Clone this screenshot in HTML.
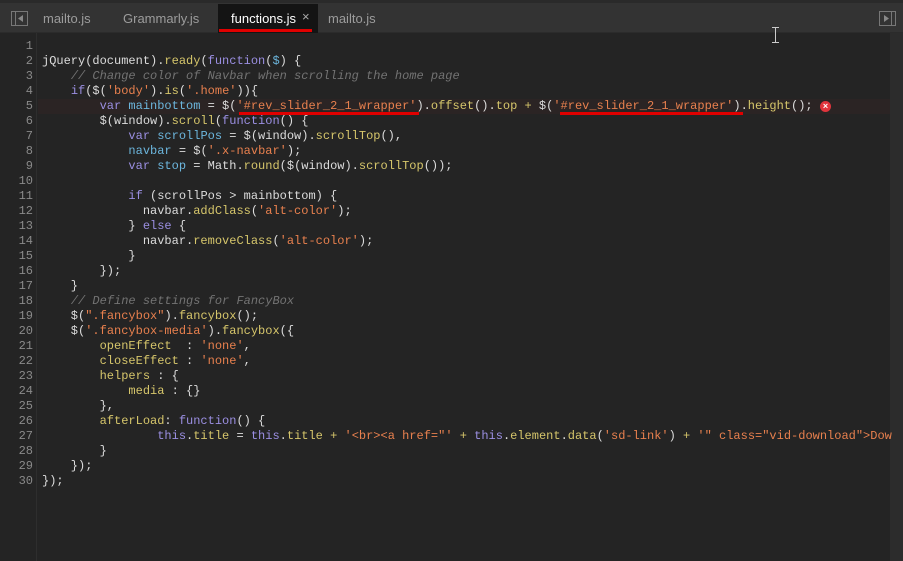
<!DOCTYPE html>
<html><head><meta charset="utf-8"><style>
*{margin:0;padding:0;box-sizing:border-box}
body{width:903px;height:561px;background:#242424;overflow:hidden;position:relative;font-family:"Liberation Sans",sans-serif}
#top{position:absolute;left:0;top:0;width:903px;height:3px;background:#2a2a2a}
#tabs{position:absolute;left:0;top:3px;width:903px;height:30px;background:#333;border-bottom:1px solid #2b2b2b}
.tab{position:absolute;top:8px;font-size:13px;color:#9c9c9c}
#act{position:absolute;left:218px;top:1px;width:100px;height:29px;background:#141414}
#gut{position:absolute;left:0;top:33px;width:37px;height:528px;border-right:1px solid #2e2e2e}
#sb{position:absolute;left:890px;top:33px;width:13px;height:528px;background:#2c2c2c}
.ln{position:absolute;left:0;width:33px;text-align:right;font:12px/15px "Liberation Mono",monospace;color:#8a8a8a}
.cl{position:absolute;left:42px;font:12px/15px "Liberation Mono",monospace;color:#dcdcdc;white-space:pre}
.k{color:#9b8fe2}.i{color:#6cb6dd}.p{color:#d6c66b}.s{color:#e8804e}.c{color:#737373;font-style:italic}
.red{position:absolute;height:3px;background:#e00000}
</style></head><body>
<div id="top"></div>
<div id="tabs">
<div id="act"></div>
<svg style="position:absolute;left:11px;top:8px" width="17" height="15"><rect x="0.5" y="0.5" width="16" height="14" fill="none" stroke="#777"/><line x1="4.5" y1="1" x2="4.5" y2="14" stroke="#777"/><path d="M12 4 L7 7.5 L12 11Z" fill="#888"/></svg>
<div class="tab" style="left:43px">mailto.js</div>
<div class="tab" style="left:123px">Grammarly.js</div>
<div class="tab" style="left:231px;color:#fff">functions.js</div>
<div class="tab" style="left:302px;color:#aaa;font-size:13px;top:6px">×</div>
<div class="tab" style="left:328px">mailto.js</div>
<svg style="position:absolute;left:879px;top:8px" width="17" height="15"><rect x="0.5" y="0.5" width="16" height="14" fill="none" stroke="#777"/><line x1="12.5" y1="1" x2="12.5" y2="14" stroke="#777"/><path d="M5 4 L10 7.5 L5 11Z" fill="#888"/></svg>
</div>
<div class="red" style="left:219px;top:29px;width:93px"></div>
<div style="position:absolute;top:28px;width:6px;height:14px;border-left:1px solid #ccc;left:775px"></div>
<div style="position:absolute;left:772px;top:27px;width:7px;height:1px;background:#ccc"></div>
<div style="position:absolute;left:772px;top:42px;width:7px;height:1px;background:#ccc"></div>
<div id="gut"></div>
<div id="sb"></div>
<div style="position:absolute;left:38px;top:99px;width:852px;height:15px;background:#2b2424"></div>
<div id="code"></div>
<script>
var L=[
'',
'jQuery(document).<span class="p">ready</span>(<span class="k">function</span>(<span class="i">$</span>) {',
'    <span class="c">// Change color of Navbar when scrolling the home page</span>',
'    <span class="k">if</span>($(<span class="s">\'body\'</span>).<span class="p">is</span>(<span class="s">\'.home\'</span>)){',
'        <span class="k">var</span> <span class="i">mainbottom</span> = $(<span class="s">\'#rev_slider_2_1_wrapper\'</span>).<span class="p">offset</span>().<span class="p">top</span> <span class="p">+</span> $(<span class="s">\'#rev_slider_2_1_wrapper\'</span>).<span class="p">height</span>();',
'        $(window).<span class="p">scroll</span>(<span class="k">function</span>() {',
'            <span class="k">var</span> <span class="i">scrollPos</span> = $(window).<span class="p">scrollTop</span>(),',
'            <span class="i">navbar</span> = $(<span class="s">\'.x-navbar\'</span>);',
'            <span class="k">var</span> <span class="i">stop</span> = Math.<span class="p">round</span>($(window).<span class="p">scrollTop</span>());',
'',
'            <span class="k">if</span> (scrollPos &gt; mainbottom) {',
'              navbar.<span class="p">addClass</span>(<span class="s">\'alt-color\'</span>);',
'            } <span class="k">else</span> {',
'              navbar.<span class="p">removeClass</span>(<span class="s">\'alt-color\'</span>);',
'            }',
'        });',
'    }',
'    <span class="c">// Define settings for FancyBox</span>',
'    $(<span class="s">".fancybox"</span>).<span class="p">fancybox</span>();',
'    $(<span class="s">\'.fancybox-media\'</span>).<span class="p">fancybox</span>({',
'        <span class="p">openEffect</span>  : <span class="s">\'none\'</span>,',
'        <span class="p">closeEffect</span> : <span class="s">\'none\'</span>,',
'        <span class="p">helpers</span> : {',
'            <span class="p">media</span> : {}',
'        },',
'        <span class="p">afterLoad</span>: <span class="k">function</span>() {',
'                <span class="k">this</span>.<span class="p">title</span> = <span class="k">this</span>.<span class="p">title</span> <span class="p">+</span> <span class="s">\'&lt;br&gt;&lt;a href="\'</span> <span class="p">+</span> <span class="k">this</span>.<span class="p">element</span>.<span class="p">data</span>(<span class="s">\'sd-link\'</span>) <span class="p">+</span> <span class="s">\'" class="vid-download"&gt;Dow</span>',
'        }',
'    });',
'});'];
var h='';
for(var n=0;n<30;n++){var t=39+15*n;h+='<div class="ln" style="top:'+t+'px">'+(n+1)+'</div><div class="cl" style="top:'+t+'px">'+L[n]+'</div>';}
document.getElementById('code').innerHTML=h;
</script>
<div class="red" style="left:239px;top:112px;width:180px"></div>
<div class="red" style="left:560px;top:112px;width:183px"></div>
<div style="position:absolute;left:820px;top:101px;width:11px;height:11px;border-radius:50%;background:#e0343c;color:#fff;font:bold 9px/11px 'Liberation Sans',sans-serif;text-align:center">×</div>
</body></html>
